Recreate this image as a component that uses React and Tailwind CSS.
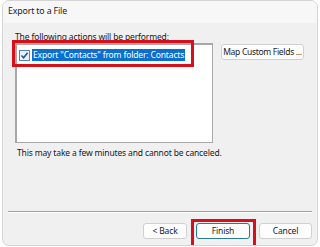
export default function App() {
  const font = { fontFamily: '"Noto Sans", "Liberation Sans", sans-serif' };
  return (
    <div className="w-[320px] h-[247px] bg-white overflow-hidden text-[#1a1a1a]" style={font}>
      <div className="relative ml-[2px] mr-[2px] h-[246px] rounded-[7px] border border-[#d4d4d4] bg-[#f0f0f0] flex flex-col overflow-hidden">
        <div className="h-[22px] shrink-0 bg-[#f7f7f7] flex items-center pl-[5px] text-[8.8px] tracking-[-0.15px]">Export to a File</div>

        <div className="flex-1 flex flex-col text-[8.5px] tracking-[-0.15px]">
          <div className="ml-[12px] mt-[8px] leading-[11px]">The following actions will be performed:</div>

          <div className="flex items-start mt-[1px] ml-[12px]">
            <div className="w-[198px] h-[100px] bg-white border border-[#a8a8a8] border-l-[2px] border-t-[2px] pt-[4px] pl-[2px]">
              <div className="flex items-center h-[12px]">
                <div className="w-[11px] h-[11px] border border-[#5a7fb0] bg-[#e8f0fb] flex items-center justify-center">
                  <svg width="9" height="9" viewBox="0 0 9 9">
                    <path d="M1.5 4.6 L3.6 6.8 L7.6 1.8" fill="none" stroke="#1f4f96" strokeWidth="1.5" />
                  </svg>
                </div>
                <div className="ml-[2px] h-[12px] bg-[#0a6fd0] text-white leading-[12px] px-[1px] whitespace-nowrap">
                  Export "Contacts" from folder: Contacts
                </div>
              </div>
            </div>
            <div className="ml-[8px] mt-[1px] h-[16px] w-[83px] bg-[#fdfdfd] border border-[#d0d0d0] rounded-[3px] flex items-center justify-center whitespace-nowrap tracking-[-0.3px]">
              Map Custom Fields ...
            </div>
          </div>

          <div className="ml-[14px] mt-[4px] leading-[11px]">This may take a few minutes and cannot be canceled.</div>

          <div className="flex-1" />

          <div className="mx-[5px] h-[2px] border-t border-[#a0a0a0] border-b border-b-white" />

          <div className="flex justify-end gap-[9px] pr-[5px] mt-[10px] mb-[6px]">
            <div className="w-[44px] h-[16px] bg-[#fdfdfd] border border-[#d0d0d0] rounded-[3px] flex items-center justify-center">&lt; Back</div>
            <div className="w-[54px] h-[16px] bg-[#fdfdfd] border border-[#2a7a9a] rounded-[3px] flex items-center justify-center">Finish</div>
            <div className="w-[53px] h-[16px] bg-[#fdfdfd] border border-[#d0d0d0] rounded-[3px] flex items-center justify-center">Cancel</div>
          </div>
        </div>

        <div className="absolute left-[9px] top-[39px] w-[182px] h-[27px] border-[3px] border-[#d4101c]" />
        <div className="absolute left-[188px] top-[218px] w-[65px] h-[30px] border-[3px] border-[#d4101c]" />
      </div>
    </div>
  );
}
